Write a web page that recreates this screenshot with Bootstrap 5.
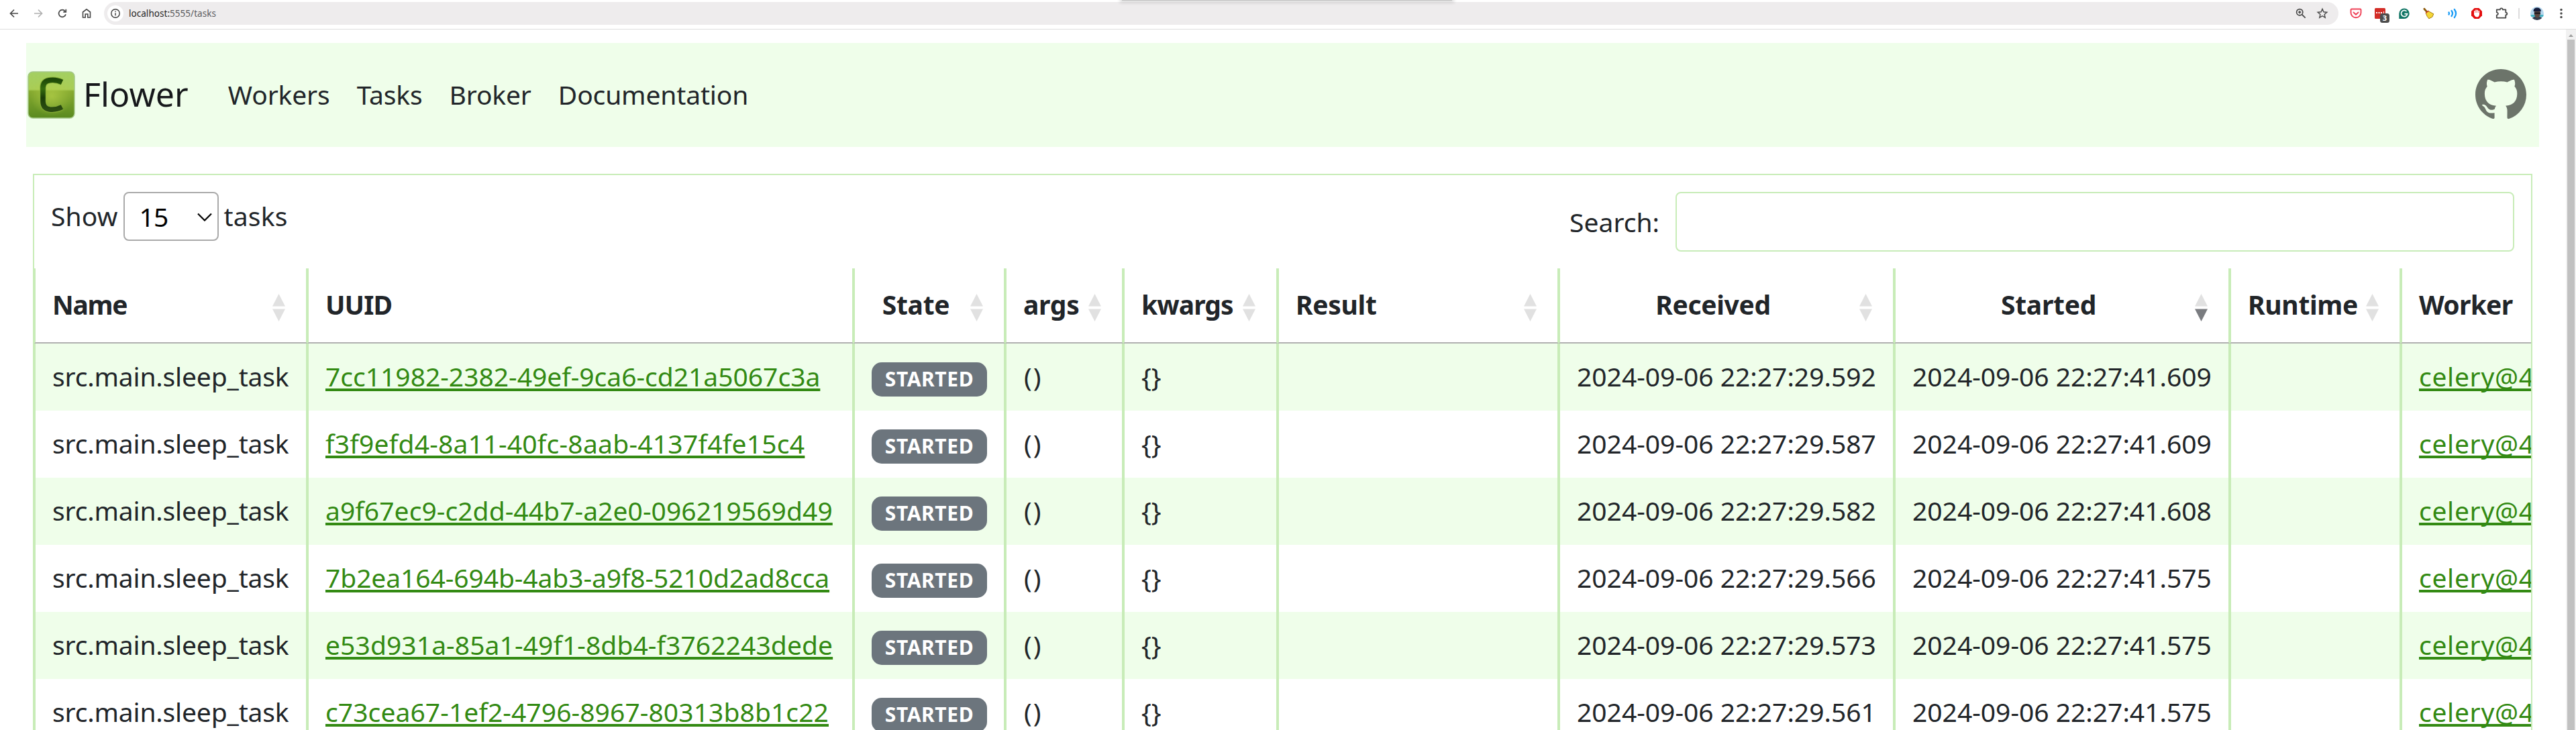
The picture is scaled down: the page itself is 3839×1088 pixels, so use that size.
<!DOCTYPE html>
<html lang="en">
<head>
<meta charset="utf-8">
<meta name="viewport" content="width=device-width, initial-scale=1">
<title>Flower</title>
<link href="https://cdn.jsdelivr.net/npm/bootstrap@5.3.0/dist/css/bootstrap.min.css" rel="stylesheet">
<style>
:root{--leaf:#c8ecb8;--mint:#effeea}
body{font-family:"Noto Sans",sans-serif;font-size:39px;line-height:60px;color:#212529;background:#fff;height:1088px;overflow:hidden}
svg{display:block;flex:none}
/* browser toolbar */
.browser-bar{height:44px;border-bottom:1px solid #dedede;padding:3px 0 6px 10px;font-size:13.5px;line-height:34px;position:relative}
.browser-bar .tools{gap:14px;width:145px}
.omnibox{background:#eeeced;border-radius:17px;height:34px;width:3330px;padding:0 15px 0 5px}
.site-info{width:24px;height:24px;background:#fff;border-radius:50%}
.omni-url{margin-left:8px;color:#5b5b5e;letter-spacing:.04px}
.omni-url b{font-weight:400;color:#1f1f1f}
.omni-actions{gap:14px}
.extensions{padding-left:14px;gap:12px}
.bar-divider{width:2px;height:16px;background:#dddcdd}
.top-shadow{position:absolute;left:1672px;top:0;width:492px;height:1px;background:#c2c2c2;box-shadow:0 0 5px 3px rgba(0,0,0,.14)}
/* page */
.page-area{height:1044px}
.page-body{width:3824px;overflow:hidden}
.scroller{width:15px;background:#f1f1f1;padding:7px 2px 0}
.scroll-thumb{background:#c1c1c1;margin-top:4px}
.flower-nav{background:var(--mint);height:155px;margin:20px 40px 0 39px;padding:0 19px 2px 2px}
.flower-nav .navbar-brand{font-size:50px;line-height:75px;color:#16181b;letter-spacing:.1px;margin:0;padding:0;gap:11px}
.flower-nav .navbar-nav{margin-left:39px}
.flower-nav .navbar-nav .nav-link{font-size:39px;line-height:60px;color:#212529;padding:0 20px;letter-spacing:-.15px}
.tasks-box{margin:40px 50px 0 49px;border:2px solid var(--leaf);height:900px;overflow:hidden}
.controls{padding:25px;height:139px}
.length-label{line-height:72px;gap:8px;letter-spacing:.15px}
.length-label .form-select{width:142px;height:73px;font-size:39px;line-height:69px;padding:0 0 0 22px;color:#000;border:2px solid #aaa;border-radius:8px;letter-spacing:-1px;background-color:#fff;background-image:url("data:image/svg+xml,%3csvg xmlns='http://www.w3.org/2000/svg' viewBox='0 0 22 13'%3e%3cpath fill='none' stroke='%23000' stroke-width='2.2' d='M1 1.5l10 10 10-10'/%3e%3c/svg%3e");background-size:22px 13px;background-position:right 8px top 29px}
.search-label{gap:24px}
.search-label .form-control{width:1250px;height:89px;border:2px solid var(--leaf);border-radius:8px}
.tasks-table{table-layout:fixed;width:4127px;border-collapse:separate;border-spacing:0;margin:0}
.tasks-table th,.tasks-table td{border:0 solid var(--leaf);border-width:0 2px;white-space:nowrap;overflow:hidden;padding:19px 25px 21px;line-height:60px}
.tasks-table th{position:relative;padding:24px 65px 26px 25px;border-bottom:2px solid #b0b0b0;font-weight:700;letter-spacing:-.3px}
.tasks-table th:nth-child(1){letter-spacing:-1.3px}
.tasks-table th:nth-child(2),.tasks-table th:nth-child(5){letter-spacing:-.9px}
.tasks-table th:nth-child(10){letter-spacing:-.7px}
.tasks-table td:first-child{letter-spacing:-.17px}
.tasks-table tbody tr:nth-child(odd) td{background:var(--mint)}
.tasks-table a{color:#338a13;text-decoration:underline;text-decoration-thickness:4px;text-underline-offset:3px;text-decoration-skip-ink:none}
.tasks-table tr:nth-child(2) a{letter-spacing:.26px}
.tasks-table tr:nth-child(3) a{letter-spacing:.07px}
.tasks-table tr:nth-child(4) a{letter-spacing:-.08px}
.tasks-table tr:nth-child(n+5) a{letter-spacing:.09px}
.tasks-table tr td:last-child a{letter-spacing:.7px}
.sorter{position:absolute;right:31px;top:38px;width:19px;height:41px;fill:#e1e1e1}
.sorter .on{fill:#7a7c80}
.state-tag{display:block;width:172px;height:51px;margin-top:9px;padding:0;border-radius:15px;background:#6c757d;font-size:30px;line-height:49px;letter-spacing:.6px;font-weight:700}
.arg-pair{letter-spacing:2px;text-indent:1px}
</style>
</head>
<body>
<header class="browser-bar d-flex align-items-center">
  <div class="tools d-flex align-items-center">
    <svg width="22" height="22" viewBox="0 0 22 22" fill="none" stroke="#474747" stroke-width="1.7"><path d="M17 11H6M11 5.5L5.5 11l5.5 5.5"/></svg>
    <svg width="22" height="22" viewBox="0 0 22 22" fill="none" stroke="#b0b0b0" stroke-width="1.7"><path d="M5 11h11M11 5.5l5.500 5.500-5.500 5.500"/></svg>
    <svg width="22" height="22" viewBox="0 0 22 22" fill="none" stroke="#474747" stroke-width="1.700"><path d="M16 12.300A5.300 5.300 0 1 1 15 7.700M16.300 4.800v4h-4"/></svg>
    <svg width="22" height="22" viewBox="0 0 22 22" fill="none" stroke="#474747" stroke-width="1.600"><path d="M5.500 17V9L11 4.800 16.500 9v8h-3.700v-5H9.200v5z"/></svg>
  </div>
  <div class="omnibox d-flex align-items-center">
    <div class="site-info d-flex align-items-center justify-content-center">
      <svg width="16" height="16" viewBox="0 0 16 16" fill="none" stroke="#3c3c3c" stroke-width="1.400"><circle cx="8" cy="8" r="6.200"/><path d="M8 7.200v4M8 4.600v1.500"/></svg>
    </div>
    <div class="omni-url"><b>localhost:</b>5555/tasks</div>
    <div class="omni-actions ms-auto d-flex">
      <svg width="18" height="18" viewBox="0 0 18 18" fill="none" stroke="#474747" stroke-width="1.700"><circle cx="7.200" cy="7.200" r="4.600"/><path d="M10.600 10.600l5 5M7.200 5.200v4M5.200 7.200h4"/></svg>
      <svg width="18" height="18" viewBox="0 0 18 18" fill="none" stroke="#474747" stroke-width="1.400"><path d="M9 2.300l1.900 4.500 4.900.4-3.700 3.200 1.100 4.800L9 12.700l-4.200 2.500 1.100-4.800-3.700-3.200 4.900-.4z"/></svg>
    </div>
  </div>
  <div class="extensions d-flex align-items-center">
    <svg width="24" height="28" viewBox="0 0 24 28" fill="none" stroke="#ef4056" stroke-width="1.900" stroke-linecap="round" stroke-linejoin="round"><path d="M5.500 7.500h13q1 0 1 1V13a7.500 7.300 0 0 1-15 0V8.500q0-1 1-1zM8.500 12.500L12 15.700l3.500-3.200"/></svg>
    <svg width="24" height="28" viewBox="0 0 24 28" overflow="visible"><rect x="4" y="6" width="16" height="16" rx="1.500" fill="#d32d27"/><path d="M6 12h2v2H6zM9.500 12h2v2h-2zM13 12h2v2h-2zM17 11h1v3h-1z" fill="#fff"/><rect x="12" y="14" width="14" height="14" rx="3.500" fill="#4d4d4d"/><text x="19" y="25" font-size="11" font-weight="700" text-anchor="middle" fill="#fff">3</text></svg>
    <svg width="24" height="28" viewBox="0 0 24 28"><path d="M12 6.500a7.700 7.700 0 1 1 0 15.400H4.300v-7.700A7.700 7.700 0 0 1 12 6.500z" fill="#0f7564"/><path d="M15.500 11a4.600 4.600 0 1 0 1.100 3.700h-4.200" fill="none" stroke="#fff" stroke-width="1.700"/></svg>
    <svg width="24" height="28" viewBox="0 0 24 28"><path d="M4.500 6.500q2-1.500 3 .5l3.500 4-2 2-3-3.500q-2-1-1.500-3z" fill="#8d5a0c"/><path d="M8.300 14q0-3 4.200-3.200l7.300 4-2 4.500-5 2.500q-3-3-4.500-7.800z" fill="#f4d636" stroke="#a57c10"/><path d="M8 13.500l4.500-3.500" stroke="#c9302c" stroke-width="1.500"/></svg>
    <svg width="24" height="28" viewBox="0 0 24 28" fill="none" stroke="#1a9bf5" stroke-width="2.300" stroke-linecap="round"><path d="M6.500 12.500q1 1.500 0 3M10.500 10q3 4 0 8M14.800 8q4.500 6 0 12"/></svg>
    <svg width="24" height="28" viewBox="0 0 24 28"><path d="M8.700 6h6.600L20 10.700v6.600L15.300 22H8.700L4 17.300v-6.600z" fill="#e40d0d"/><path d="M8.800 14V10.500M11 13V9M13.200 13V9.300M15.300 14v-3.500" stroke="#fff" stroke-width="1.600" stroke-linecap="round"/><path d="M8 13h8v3q-1 3.500-3.500 3.500T8 16z" fill="#fff"/></svg>
    <svg width="26" height="28" viewBox="0 0 26 28" fill="none" stroke="#474747" stroke-width="1.800" stroke-linejoin="round"><path d="M5.800 8.400h5q0-2 2-2t2 2h4.500v4.300q2 .2 2 1.800t-2 1.800v4.300H5.800v-4q2.200-.6 2.200-2.100t-2.200-2.100z"/></svg>
    <div class="bar-divider"></div>
    <svg width="28" height="28" viewBox="0 0 28 28"><defs><clipPath id="face"><circle cx="14" cy="14" r="10"/></clipPath></defs><g clip-path="url(#face)"><path d="M4 4h20v20H4z" fill="#b5d6ee"/><path d="M4 16h20v3H4z" fill="#47b4c4"/><path d="M6 24q1-5 5-5h7q4 1 5 5z" fill="#343b4b"/><ellipse cx="14.300" cy="14" rx="4.600" ry="6.500" fill="#5c4640"/><path d="M8.500 11q0-5.500 5.500-5.500t6 5.500z" fill="#151c3a"/><path d="M10 12.500h9v2.300h-9z" fill="#16161c"/></g></svg>
    <svg width="20" height="28" viewBox="0 0 20 28" fill="#474747"><circle cx="10" cy="8.500" r="1.700"/><circle cx="10" cy="14" r="1.700"/><circle cx="10" cy="19.500" r="1.700"/></svg>
  </div>
  <div class="top-shadow"></div>
</header>

<div class="page-area d-flex">
  <main class="page-body">
    <nav class="flower-nav navbar navbar-expand d-flex align-items-center">
      <a class="navbar-brand d-flex align-items-center" href="#">
        <svg width="72" height="72" viewBox="0 0 72 72">
          <defs>
            <linearGradient id="tile" x1="0" y1="0" x2="0" y2="1"><stop offset="0" stop-color="#a3cf62"/><stop offset=".38" stop-color="#a9cd55"/><stop offset=".42" stop-color="#86aa30"/><stop offset="1" stop-color="#5a8a20"/></linearGradient>
            <radialGradient id="glow" cx=".5" cy=".5" r=".5"><stop offset="0" stop-color="#b3cf48" stop-opacity=".75"/><stop offset="1" stop-color="#b3cf48" stop-opacity="0"/></radialGradient>
            <linearGradient id="stalk" x1="0" y1="0" x2="0" y2="1"><stop offset="0" stop-color="#1f4a08"/><stop offset=".3" stop-color="#356b0e"/><stop offset=".6" stop-color="#1b3d08"/><stop offset="1" stop-color="#2c4d12"/></linearGradient>
          </defs>
          <rect x="1" y="2" width="69" height="69" rx="7" fill="url(#tile)" stroke="#a5c889" stroke-width="1.500"/>
          <rect x="4" y="8" width="64" height="60" fill="url(#glow)"/>
          <path d="M51.500 17.500Q43 13.500 34 14.500 23.500 15.500 23 25V46Q23 56.500 33 58 43 59 51.500 54.500" fill="none" stroke="#86ad37" stroke-width="9.500"/>
          <path d="M51.500 17.500Q43 13.500 34 14.500 23.500 15.500 23 25V46Q23 56.500 33 58 43 59 51.500 54.500" fill="none" stroke="url(#stalk)" stroke-width="7.500"/>
        </svg>
        <span>Flower</span>
      </a>
      <div class="navbar-nav">
        <a class="nav-link" href="#">Workers</a>
        <a class="nav-link" href="#">Tasks</a>
        <a class="nav-link" href="#">Broker</a>
        <a class="nav-link" href="#">Documentation</a>
      </div>
      <a class="ms-auto" href="#" aria-label="GitHub">
        <svg width="76" height="76" viewBox="0 0 16 16" fill="#6c746a"><path d="M8 0C3.580 0 0 3.580 0 8c0 3.540 2.290 6.530 5.470 7.590.4.070.55-.17.55-.38 0-.19-.01-.82-.01-1.490-2.010.37-2.530-.49-2.690-.94-.09-.23-.48-.94-.82-1.130-.28-.15-.68-.52-.01-.53.63-.01 1.080.58 1.230.82.72 1.210 1.870.87 2.330.66.07-.52.28-.87.51-1.070-1.780-.2-3.640-.89-3.640-3.950 0-.87.31-1.590.82-2.150-.08-.2-.36-1.020.08-2.120 0 0 .67-.21 2.200.82.640-.18 1.320-.27 2-.27s1.360.09 2 .27c1.530-1.040 2.200-.82 2.200-.82.44 1.100.16 1.920.08 2.120.51.56.82 1.270.82 2.150 0 3.070-1.870 3.750-3.650 3.950.29.25.54.73.54 1.480 0 1.070-.01 1.930-.01 2.200 0 .21.15.46.55.38A8.010 8.010 0 0 0 16 8c0-4.420-3.580-8-8-8z"/></svg>
      </a>
    </nav>

    <section class="tasks-box">
      <div class="controls d-flex justify-content-between align-items-start">
        <label class="length-label d-flex align-items-start">Show
          <select class="form-select"><option>15</option></select>
          tasks</label>
        <label class="search-label d-flex align-items-center">Search:
          <input type="search" class="form-control"></label>
      </div>
      <table class="tasks-table">
        <colgroup><col style="width:407px"><col style="width:814px"><col style="width:226px"><col style="width:176px"><col style="width:230px"><col style="width:419px"><col style="width:500px"><col style="width:500px"><col style="width:255px"><col style="width:600px"></colgroup>
        <thead>
          <tr>
            <th>Name<svg class="sorter" viewBox="0 0 19 41"><path d="M9.500 0L19 18.500H0zM9.500 41L0 22.500h19z"/></svg></th>
            <th>UUID</th>
            <th class="text-center">State<svg class="sorter" viewBox="0 0 19 41"><path d="M9.500 0L19 18.500H0zM9.500 41L0 22.500h19z"/></svg></th>
            <th>args<svg class="sorter" viewBox="0 0 19 41"><path d="M9.500 0L19 18.500H0zM9.500 41L0 22.500h19z"/></svg></th>
            <th>kwargs<svg class="sorter" viewBox="0 0 19 41"><path d="M9.500 0L19 18.500H0zM9.500 41L0 22.500h19z"/></svg></th>
            <th>Result<svg class="sorter" viewBox="0 0 19 41"><path d="M9.500 0L19 18.500H0zM9.500 41L0 22.500h19z"/></svg></th>
            <th class="text-center">Received<svg class="sorter" viewBox="0 0 19 41"><path d="M9.500 0L19 18.500H0zM9.500 41L0 22.500h19z"/></svg></th>
            <th class="text-center">Started<svg class="sorter" viewBox="0 0 19 41"><path d="M9.500 0L19 18.500H0z"/><path class="on" d="M9.500 41L0 22.500h19z"/></svg></th>
            <th>Runtime<svg class="sorter" viewBox="0 0 19 41"><path d="M9.500 0L19 18.500H0zM9.500 41L0 22.500h19z"/></svg></th>
            <th>Worker</th>
          </tr>
        </thead>
        <tbody>
          <tr><td>src.main.sleep_task</td><td><a href="#">7cc11982-2382-49ef-9ca6-cd21a5067c3a</a></td><td><span class="badge state-tag">STARTED</span></td><td class="arg-pair">()</td><td>{}</td><td></td><td>2024-09-06 22:27:29.592</td><td>2024-09-06 22:27:41.609</td><td></td><td><a href="#">celery@4</a></td></tr>
          <tr><td>src.main.sleep_task</td><td><a href="#">f3f9efd4-8a11-40fc-8aab-4137f4fe15c4</a></td><td><span class="badge state-tag">STARTED</span></td><td class="arg-pair">()</td><td>{}</td><td></td><td>2024-09-06 22:27:29.587</td><td>2024-09-06 22:27:41.609</td><td></td><td><a href="#">celery@4</a></td></tr>
          <tr><td>src.main.sleep_task</td><td><a href="#">a9f67ec9-c2dd-44b7-a2e0-096219569d49</a></td><td><span class="badge state-tag">STARTED</span></td><td class="arg-pair">()</td><td>{}</td><td></td><td>2024-09-06 22:27:29.582</td><td>2024-09-06 22:27:41.608</td><td></td><td><a href="#">celery@4</a></td></tr>
          <tr><td>src.main.sleep_task</td><td><a href="#">7b2ea164-694b-4ab3-a9f8-5210d2ad8cca</a></td><td><span class="badge state-tag">STARTED</span></td><td class="arg-pair">()</td><td>{}</td><td></td><td>2024-09-06 22:27:29.566</td><td>2024-09-06 22:27:41.575</td><td></td><td><a href="#">celery@4</a></td></tr>
          <tr><td>src.main.sleep_task</td><td><a href="#">e53d931a-85a1-49f1-8db4-f3762243dede</a></td><td><span class="badge state-tag">STARTED</span></td><td class="arg-pair">()</td><td>{}</td><td></td><td>2024-09-06 22:27:29.573</td><td>2024-09-06 22:27:41.575</td><td></td><td><a href="#">celery@4</a></td></tr>
          <tr><td>src.main.sleep_task</td><td><a href="#">c73cea67-1ef2-4796-8967-80313b8b1c22</a></td><td><span class="badge state-tag">STARTED</span></td><td class="arg-pair">()</td><td>{}</td><td></td><td>2024-09-06 22:27:29.561</td><td>2024-09-06 22:27:41.575</td><td></td><td><a href="#">celery@4</a></td></tr>
        </tbody>
      </table>
    </section>
  </main>
  <div class="scroller d-flex flex-column">
    <svg width="11" height="4" viewBox="0 0 11 4" fill="#9c9c9c"><path d="M5.500 0L9 4H2z"/></svg>
    <div class="scroll-thumb flex-grow-1"></div>
  </div>
</div>
<script src="https://cdn.jsdelivr.net/npm/bootstrap@5.3.0/dist/js/bootstrap.bundle.min.js"></script>
</body>
</html>
